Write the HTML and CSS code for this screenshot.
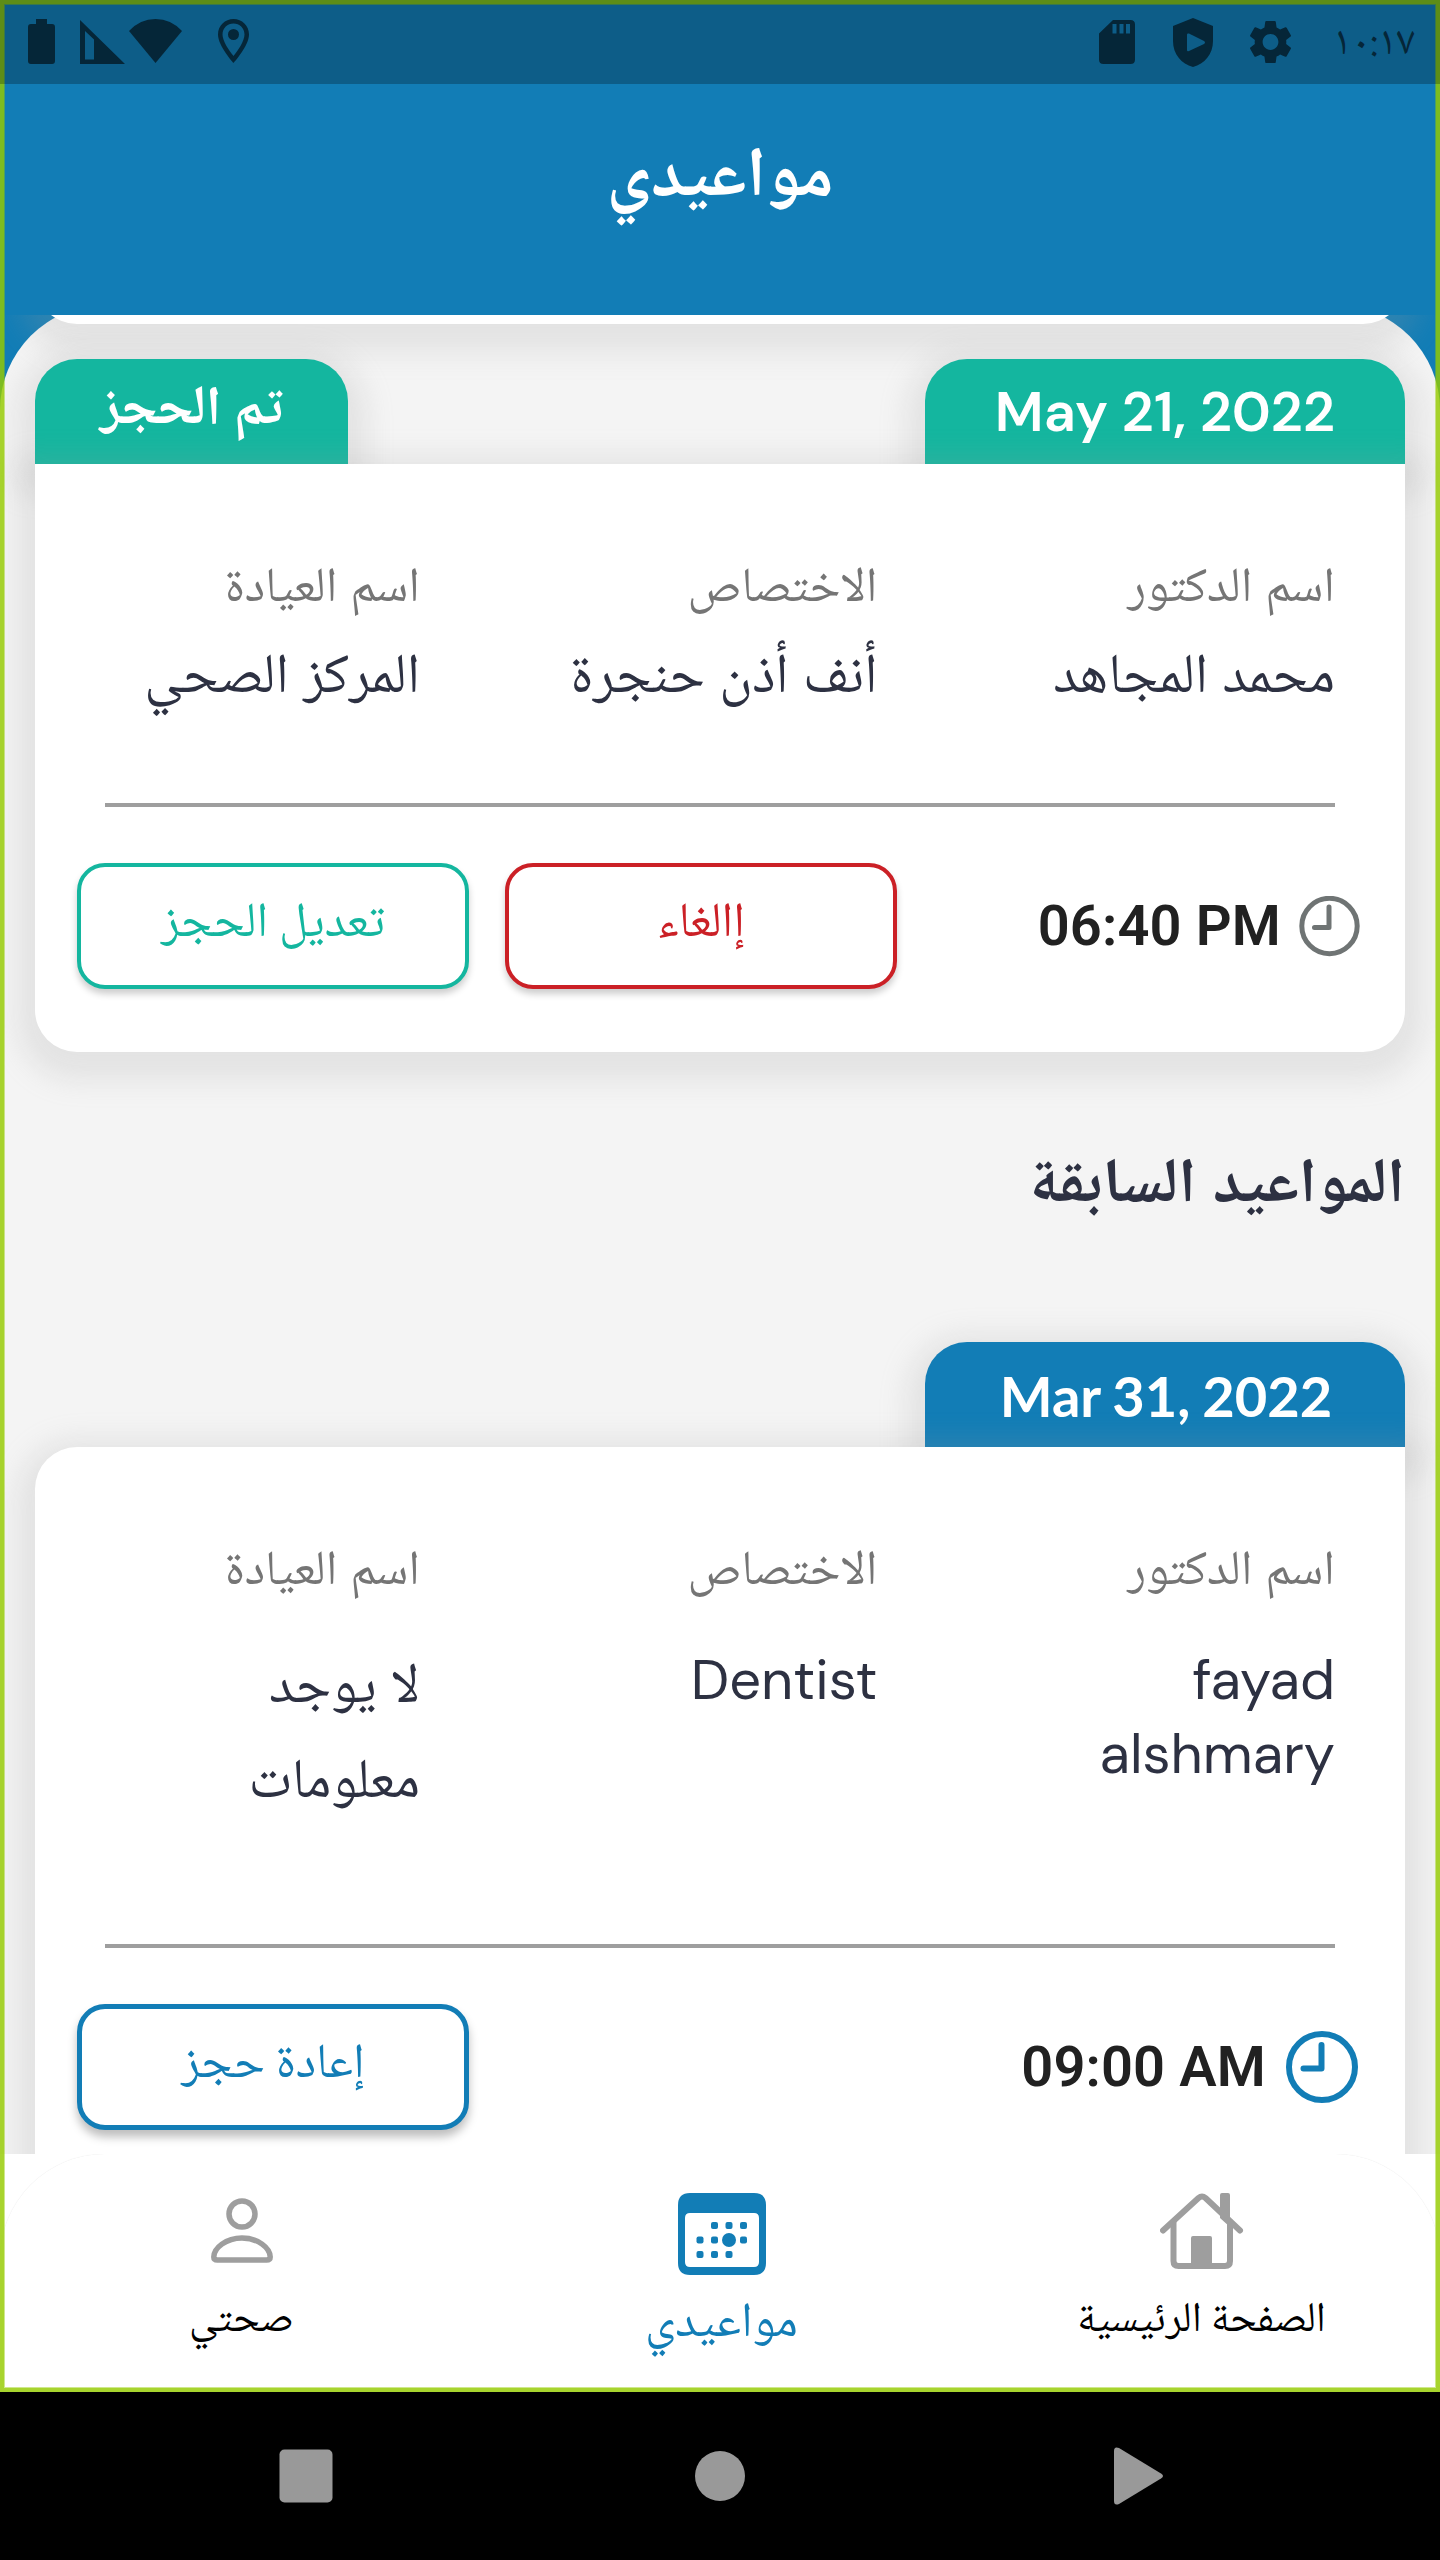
FILE: index.html
```
<!DOCTYPE html>
<html lang="ar" dir="rtl">
<head>
<meta charset="utf-8">
<title>مواعيدي</title>
<link rel="stylesheet" href="styles.css">
</head>
<body>
<div class="device">
  <div class="status-bar">
    <div class="status-group">
      <svg class="ic-battery" width="27" height="46" viewBox="0 0 27 46"><path d="M8 0h11v5h5q3 0 3 3v34q0 3-3 3H3q-3 0-3-3V8q0-3 3-3h5z"/></svg>
      <svg class="ic-signal" width="45" height="44" viewBox="0 0 45 44"><path fill-rule="evenodd" d="M0 0L45 44H0zM5 11V39.500H14V19.500z"/></svg>
      <svg class="ic-wifi" width="53" height="44" viewBox="0 0 53 44"><path d="M0 12Q11 0 26.500 0T53 12L26.500 44z"/></svg>
      <svg class="ic-pin" width="31" height="44" viewBox="0 0 31 44"><path fill-rule="evenodd" d="M15.500 0C7 0 0 6.500 0 15.500C0 27 15.500 44 15.500 44S31 27 31 15.500C31 6.500 24 0 15.500 0zM15.500 4.500C21.500 4.500 26.500 9 26.500 15.500C26.500 22 20 31.500 15.500 37C11 31.500 4.500 22 4.500 15.500C4.500 9 9.500 4.500 15.500 4.500z"/><circle cx="15.500" cy="15.500" r="5.500"/></svg>
    </div>
    <div class="status-group">
      <svg class="ic-sd" width="36" height="44" viewBox="0 0 36 44"><path fill-rule="evenodd" d="M14 0H31.500Q36 0 36 4.500V39.500Q36 44 31.500 44H4.500Q0 44 0 39.500V13.500zM13.500 4v9.500h4V4zM20.500 4v9.500h4V4zM27 4v9.500h4V4z"/></svg>
      <svg class="ic-shield" width="40" height="49" viewBox="0 0 40 49"><path fill-rule="evenodd" d="M20 0L40 8V23C40 36 31.500 46 20 49C8.500 46 0 36 0 23V8zM14 16.500V32Q14 34 16 33L31 26Q33 24.500 31 23L16 15.500Q14 15 14 16.500z"/></svg>
      <svg class="ic-gear" width="43" height="44" viewBox="2.200 2 19.600 20"><path d="M19.140 12.940c.04-.3.06-.61.06-.94 0-.32-.02-.64-.07-.94l2.030-1.580c.18-.14.23-.41.12-.61l-1.920-3.320c-.12-.22-.37-.29-.59-.22l-2.390.96c-.5-.38-1.030-.7-1.620-.94L14.400 2.810c-.04-.24-.24-.41-.48-.41h-3.840c-.24 0-.43.17-.47.41L9.250 5.350c-.59.24-1.130.57-1.620.94L5.240 5.330c-.22-.08-.47 0-.59.22L2.740 8.870c-.12.21-.08.47.12.61l2.030 1.580c-.05.3-.09.63-.09.94s.02.64.07.94l-2.030 1.580c-.18.14-.23.41-.12.61l1.920 3.320c.12.22.37.29.59.22l2.390-.96c.5.38 1.030.7 1.620.94l.36 2.540c.05.24.24.41.48.41h3.840c.24 0 .44-.17.47-.41l.36-2.540c.59-.24 1.130-.56 1.620-.94l2.390.96c.22.08.47 0 .59-.22l1.920-3.320c.12-.22.07-.47-.12-.61zM12 15.600c-1.980 0-3.600-1.620-3.600-3.600s1.620-3.600 3.600-3.600 3.600 1.620 3.600 3.600-1.620 3.600-3.600 3.600z"/></svg>
      <span class="status-time">١٠:١٧</span>
    </div>
  </div>

  <header class="app-header"><h1 class="app-title">مواعيدي</h1></header>

  <main class="list">
    <div class="panel">
      <div class="card card-scrolled"></div>

      <section class="appointment upcoming">
        <div class="tabs">
          <div class="tab tab-date tab-green date-dm" dir="ltr">May 21, 2022</div>
          <div class="tab tab-state tab-green">تم الحجز</div>
        </div>
        <div class="card card-upcoming">
          <div class="details">
            <div class="field"><span class="label">اسم الدكتور</span><span class="value">محمد المجاهد</span></div>
            <div class="field"><span class="label">الاختصاص</span><span class="value">أنف أذن حنجرة</span></div>
            <div class="field"><span class="label">اسم العيادة</span><span class="value">المركز الصحي</span></div>
          </div>
          <div class="divider"></div>
          <div class="actions">
            <svg class="clock clock-grey" width="61" height="61" viewBox="0 0 61 61"><circle cx="30.500" cy="30" r="27.700"/><path d="M30 11V31.500H15.500"/></svg>
            <span class="time" dir="ltr">06:40 PM</span>
            <button class="btn btn-red">إالغاء</button>
            <button class="btn btn-green">تعديل الحجز</button>
          </div>
        </div>
      </section>

      <h2 class="section-title">المواعيد السابقة</h2>

      <section class="appointment previous">
        <div class="tabs">
          <div class="tab tab-date tab-blue date-lato" dir="ltr">Mar 31, 2022</div>
        </div>
        <div class="card card-previous">
          <div class="details">
            <div class="field"><span class="label">اسم الدكتور</span><span class="value latin">fayad alshmary</span></div>
            <div class="field"><span class="label">الاختصاص</span><span class="value latin">Dentist</span></div>
            <div class="field"><span class="label">اسم العيادة</span><span class="value">لا يوجد معلومات</span></div>
          </div>
          <div class="divider"></div>
          <div class="actions">
            <svg class="clock clock-blue" width="72" height="72" viewBox="0 0 72 72"><circle cx="36" cy="36" r="33"/><path d="M35.500 14V37.500H17.500"/></svg>
            <span class="time" dir="ltr">09:00 AM</span>
            <button class="btn btn-blue">إعادة حجز</button>
          </div>
        </div>
      </section>
    </div>
  </main>

  <nav class="bottom-nav">
    <div class="nav-inner">
      <a class="nav-item">
        <svg class="nav-icon" width="84" height="76" viewBox="0 0 84 76"><g fill="none" stroke="#9e9e9e" stroke-width="6" stroke-linecap="round" stroke-linejoin="round"><path d="M3 37.500L38.500 5Q42 2 45.500 5L80 37.500"/><path d="M13.500 29V68Q13.500 73 18.500 73H65Q70 73 70 68V29"/></g><path fill="#9e9e9e" d="M60 25V2Q60 0 62 0H68Q70 0 70 2V34zM31 73V45Q31 43 33 43H50Q52 43 52 45V73z"/></svg>
        <span class="nav-label">الصفحة الرئيسية</span>
      </a>
      <a class="nav-item active">
        <svg class="nav-icon" width="88" height="82" viewBox="0 0 88 82"><g fill="#127db6"><path fill-rule="evenodd" d="M12 0H76Q88 0 88 12V70Q88 82 76 82H12Q0 82 0 70V12Q0 0 12 0zM12 20Q7 20 7 25V69Q7 74 12 74H76Q81 74 81 69V25Q81 20 76 20z"/><rect x="33" y="29" width="7" height="7" rx="2"/><rect x="47.500" y="29" width="7" height="7" rx="2"/><rect x="62" y="29" width="7" height="7" rx="2"/><rect x="18.500" y="43.500" width="7" height="7" rx="2"/><rect x="33" y="43.500" width="7" height="7" rx="2"/><circle cx="51" cy="47" r="7"/><rect x="62" y="43.500" width="7" height="7" rx="2"/><rect x="18.500" y="58" width="7" height="7" rx="2"/><rect x="33" y="58" width="7" height="7" rx="2"/><rect x="47.500" y="58" width="7" height="7" rx="2"/></g></svg>
        <span class="nav-label">مواعيدي</span>
      </a>
      <a class="nav-item">
        <svg class="nav-icon" width="62" height="76" viewBox="0 0 62 76"><g fill="none" stroke="#9e9e9e" stroke-width="5.500"><circle cx="31" cy="21" r="13"/><path d="M2.800 64C2.800 55 15 45 31 45S59.200 55 59.200 64Q59.200 67 55.500 67H6.500Q2.800 67 2.800 64z"/></g></svg>
        <span class="nav-label">صحتي</span>
      </a>
    </div>
  </nav>

  <div class="system-nav">
    <svg width="50" height="58" viewBox="0 0 50 58"><path fill="#999" d="M0 4Q0 -1 5 1L47 26.500Q51 29 47 31.500L5 57Q0 59 0 54z"/></svg>
    <svg class="sys-home" width="52" height="52" viewBox="0 0 52 52"><circle cx="26" cy="26" r="25" fill="#999"/></svg>
    <svg width="54" height="54" viewBox="0 0 54 54"><rect x=".5" y=".5" width="53" height="53" rx="5" fill="#999"/></svg>
  </div>

  <div class="focus-frame"></div>
</div>
</body>
</html>
```
FILE: styles.css
```
* { box-sizing: border-box; }

body {
  margin: 0;
  font-family: "Noto Naskh Arabic", "DM Sans", serif;
  background: #000;
}

.device {
  position: relative;
  display: flex;
  flex-direction: column;
  width: 1440px;
  height: 2560px;
  overflow: hidden;
  background: #127db6;
}

/* system status bar */
.status-bar {
  position: relative;
  z-index: 3;
  direction: ltr;
  flex: none;
  display: flex;
  justify-content: space-between;
  height: 84px;
  padding: 0 27px 0 28px;
  background: rgba(0, 0, 0, .25);
}
.status-group { display: flex; align-items: flex-start; }
.status-group svg { flex: none; fill: #052638; }
.ic-battery { margin-top: 19px; }
.ic-signal { margin: 20px 0 0 25px; }
.ic-wifi { margin: 19px 0 0 4px; }
.ic-pin { margin: 19px 0 0 36px; }
.ic-sd { margin-top: 20px; }
.ic-shield { margin: 18px 0 0 38px; }
.ic-gear { margin: 20px 0 0 36px; }
.status-time {
  width: 80px;
  margin-left: 41px;
  font-size: 41px;
  line-height: 90px;
  color: #052638;
}

/* header */
.app-header {
  flex: none;
  height: 231px;
  text-align: center;
}
.app-title {
  margin: 0;
  font-size: 70px;
  font-weight: 700;
  line-height: 193px;
  color: #fff;
}

/* scrolling list */
.list {
  flex: none;
  height: 1839px;
  overflow: hidden;
}
.panel {
  display: flex;
  flex-direction: column;
  height: 1960px;
  margin-top: -10px;
  padding: 0 35px;
  border-radius: 105px 105px 0 0;
  background: #f4f4f4;
}
.card,
.tab { box-shadow: 0 10.5px 29px 17.5px rgba(158, 158, 158, .2); }

.card {
  flex: none;
  border-radius: 42px;
  background: #fff;
}
.card-scrolled {
  height: 90px;
  margin-top: -71px;
}
.appointment {
  flex: none;
  display: flex;
  flex-direction: column;
}
.upcoming { padding-top: 35px; }
.tabs {
  display: flex;
  justify-content: space-between;
  height: 105px;
}
.tab {
  border-radius: 42px 42px 0 0;
  font-size: 56px;
  line-height: 105px;
  text-align: center;
  color: #fff;
}
.tab-date { width: 480px; }
.tab-state {
  width: 313px;
  font-size: 55px;
  font-weight: 700;
  line-height: 107px;
}
.tab-green { background: #14b69f; }
.tab-blue { background: #127db6; }
.date-dm { font-family: "DM Sans", Inter, sans-serif; font-weight: 600; line-height: 106px; }
.date-lato {
  padding-left: 2px;
  font-family: Lato, sans-serif;
  font-weight: 700;
  line-height: 108px;
  word-spacing: -1.5px;
}

.card-upcoming { height: 588px; border-radius: 0 0 42px 42px; }
.card-previous { height: 760px; border-radius: 42px 0 42px 42px; }

.details {
  display: flex;
  justify-content: space-between;
  padding: 85px 70px 0;
  word-spacing: 2px;
}
.card-upcoming .details { height: 339px; }
.card-previous .details { height: 497px; }
.field {
  display: flex;
  flex-direction: column;
  width: 315px;
}
.label {
  font-size: 49px;
  line-height: 84px;
  color: #757575;
}
.value {
  font-size: 56px;
  line-height: 95px;
  color: #2d3142;
  white-space: nowrap;
}
.card-previous .value { margin-top: 27px; padding-left: 90px; white-space: normal; }
.card-previous .latin {
  padding-left: 0;
  font-family: "DM Sans", Inter, sans-serif;
  line-height: 74px;
}
.divider {
  height: 4px;
  margin: 0 70px;
  background: #9e9e9e;
}

.actions {
  display: flex;
  align-items: center;
  height: 126px;
  margin-top: 56px;
  padding: 0 45px 0 42px;
}
.card-previous .actions { padding-right: 47px; }
.clock {
  flex: none;
  fill: none;
  stroke-linecap: round;
  stroke-linejoin: round;
}
.clock-grey { stroke: #6f7474; stroke-width: 5px; }
.clock-blue { stroke: #127db6; stroke-width: 6px; }
.time {
  margin: 0 18px 0 auto;
  font-family: Roboto, sans-serif;
  font-size: 56px;
  font-weight: 600;
  line-height: 126px;
  letter-spacing: .15px;
  color: #212121;
}
.card-previous .time { margin-right: 20px; }
.btn {
  flex: none;
  width: 392px;
  height: 126px;
  padding: 0;
  border: 4px solid;
  border-radius: 28px;
  background: #fff;
  font-family: inherit;
  font-size: 49px;
  line-height: 118px;
  box-shadow: 0 5px 7px rgba(0, 0, 0, .2);
}
.btn + .btn { margin-right: 36px; }
.btn-red { color: #cb2026; border-color: #cb2026; }
.btn-green { color: #14b69f; border-color: #14b69f; }
.btn-blue { color: #127db6; border: 5px solid #127db6; line-height: 116px; box-shadow: 0 7px 10px rgba(0, 0, 0, .26); }

.section-title {
  flex: none;
  margin: 83px 0 100px;
  font-size: 63px;
  font-weight: 700;
  line-height: 107px;
  word-spacing: 3px;
  color: #2d3142;
}

/* bottom navigation */
.bottom-nav {
  position: relative;
  z-index: 1;
  flex: none;
  height: 238px;
  overflow: hidden;
  background: #fff;
}
.nav-inner {
  display: flex;
  height: 238px;
  border-radius: 105px 105px 0 0;
  background: #fff;
  box-shadow: 0 0 1px rgba(0, 0, 0, .12);
}
.nav-item {
  flex: 1;
  display: flex;
  flex-direction: column;
  align-items: center;
  padding: 39px 0 0 3px;
  color: #000;
}
.nav-icon { flex: none; }
.nav-label {
  margin-top: 17px;
  font-size: 42px;
  line-height: 72px;
}
.active .nav-label {
  margin-top: 9px;
  font-size: 49px;
  line-height: 83px;
  color: #127db6;
}

/* system navigation */
.system-nav {
  flex: none;
  display: flex;
  align-items: center;
  justify-content: space-between;
  height: 168px;
  padding: 0 276px 0 279px;
  background: #000;
}
.sys-home { margin-right: 8px; }

/* focus outline around the app surface */
.focus-frame {
  position: absolute;
  top: 0;
  left: 0;
  z-index: 2;
  width: 1440px;
  height: 2392px;
  border: 4px solid rgba(149, 203, 0, .82);
  box-shadow: inset 0 0 0 1px rgba(149, 203, 0, .45);
}
```
